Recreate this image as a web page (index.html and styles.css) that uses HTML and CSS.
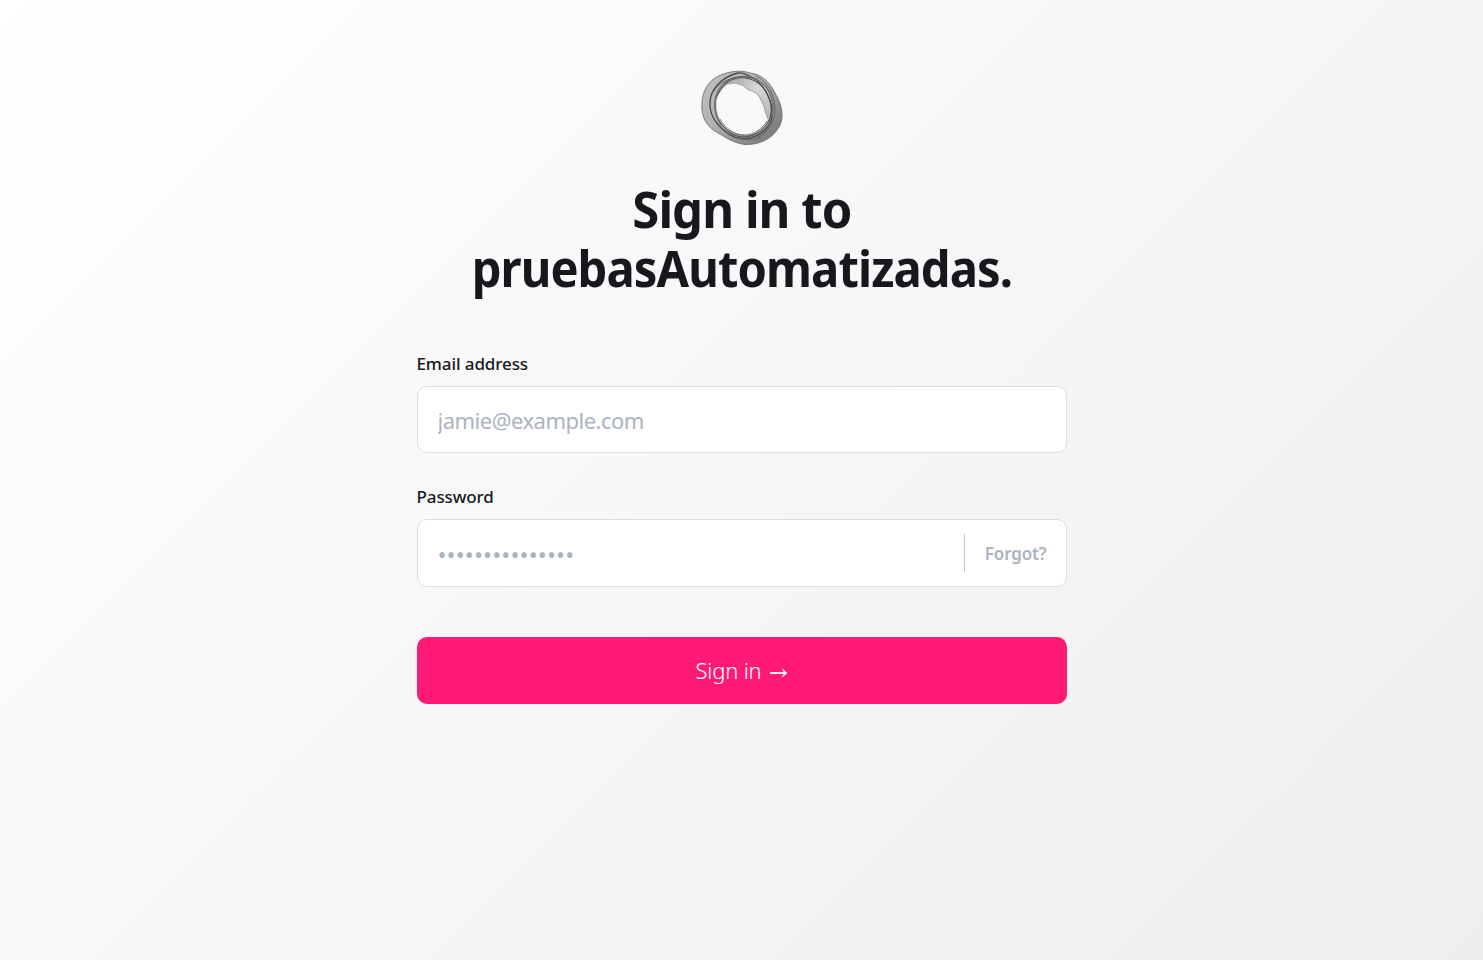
FILE: index.html
```html
<!DOCTYPE html>
<html lang="en">
<head>
<meta charset="utf-8">
<title>Sign in to pruebasAutomatizadas.</title>
<link rel="stylesheet" href="styles.css">
</head>
<body>
<main class="signin">
  <svg class="logo" viewBox="0 0 100 95" aria-hidden="true">
    <defs>
      <linearGradient id="smoke" x1="0" y1="0" x2="1" y2="1">
        <stop offset="0" stop-color="#c4c4c4"/>
        <stop offset=".45" stop-color="#b0b0b0"/>
        <stop offset="1" stop-color="#6d6d6d"/>
      </linearGradient>
      <linearGradient id="veil" x1="0" y1="0" x2="1" y2="1">
        <stop offset="0" stop-color="#9a9a9a"/>
        <stop offset=".5" stop-color="#d8d8d8"/>
        <stop offset="1" stop-color="#b4b4b4"/>
      </linearGradient>
    </defs>
    <path fill="url(#smoke)" fill-rule="evenodd" d="M10 48C9 35 14 24 23 18C33 12 47 9 58 13C69 14 78 22 83 33C91 46 93 60 85 70C78 80 66 85 53 84.500C41 83 33 77 26 73C15 67 10 58 10 48ZM25 38C23 49 26 58 31 65C39 73 50 77 61 74C70 71 76 65 78 55C79 39 73 26 61 20C50 16 32 21 25 38Z"/>
    <path fill="url(#veil)" d="M28 28C37 15 54 13 65 18C75 25 81 38 80 51L76 59C73 51 73 45 68 39C66 33 61 31 57 30C53 28 51 24 46 24C39 24 34 24 28 28Z"/>
    <g fill="none" stroke-linecap="round">
      <path stroke="#666" stroke-width=".8" d="M10 48C9 35 14 24 23 18C33 12 47 9 58 13C69 14 78 22 83 33C91 46 93 60 85 70C78 80 66 85 53 84.500C41 83 33 77 26 73C15 67 10 58 10 48Z"/>
      <path stroke="#4a4a4a" stroke-width="1.300" d="M46 13C30 17 18 29 18 43C17 57 28 70 42 77C56 82 70 76 78 64C84 49 76 27 61 18C56 15 51 12 46 13Z"/>
      <path stroke="#444" stroke-width="1" d="M23 42C22 55 28 66 40 74C53 81 67 75 76 62C84 47 76 31 66 23C52 13 30 16 23 42Z"/>
      <path stroke="#747474" stroke-width="1.600" d="M29 65C21 52 21 38 28 28C37 15 58 13 70 23C79 31 83 43 80 56"/>
      <path stroke="#606060" stroke-width=".8" d="M28 59C32 67 42 75 52 75C62 75 71 68 75 61M22 31C31 17 50 14 65 19M64 16C76 22 83 35 83 49C83 64 75 73 65 78M38 74C47 80 59 82 69 77"/>
      <path stroke="#888" stroke-width=".8" d="M46 24C51 24 53 28 57 30C63 31 67 35 69 40C73 46 73 54 76 59"/>
    </g>
  </svg>
  <h1 class="title"><span class="line line-a">Sign in to</span><span class="line line-b">pruebasAutomatizadas.</span></h1>
  <form class="form">
    <label class="label" for="email">Email address</label>
    <div class="field"><input class="input" id="email" type="email" placeholder="jamie@example.com"></div>
    <label class="label label-password" for="password">Password</label>
    <div class="field field-password">
      <input class="input dots" id="password" type="password" placeholder="•••••••••••••••">
      <a class="forgot">Forgot?</a>
    </div>
    <button class="submit" type="button"><span class="submit-text">Sign in</span><svg class="arrow" viewBox="0 0 18 12" aria-hidden="true"><path d="M0 6H15" fill="none" stroke="#fff" stroke-width="1.8"/><path d="M12.500 2L17 6L12.500 10L14.300 6Z" fill="#fff" stroke="#fff" stroke-width=".6"/></svg></button>
  </form>
</main>
</body>
</html>
```
FILE: styles.css
```css
* { box-sizing: border-box; }
body {
  margin: 0;
  min-height: 960px;
  background: linear-gradient(135deg, #fff 0%, #eee 100%);
  font-family: "Noto Sans", "Open Sans", sans-serif;
  color: #16181d;
}
.signin {
  width: 650px;
  margin: 0 auto;
  padding-top: 60px;
  display: flex;
  flex-direction: column;
  align-items: center;
}
.logo { width: 100px; height: 95px; display: block; }
.title {
  margin: 25px 0 0;
  font-size: 50px;
  line-height: 59px;
  font-weight: 700;
  text-align: center;
  white-space: nowrap;
}
.line { display: block; letter-spacing: -.95px; transform: scaleX(.942); }
.line-a { transform: scaleX(.98); }
.form { width: 100%; display: flex; flex-direction: column; margin-top: 54px; }
.label { font-size: 17px; line-height: 24px; font-weight: 500; letter-spacing: -.1px; }
.label-password { margin-top: 32px; }
.field {
  height: 67px;
  margin-top: 10px;
  display: flex;
  align-items: center;
  background: #fff;
  border: 1px solid #dedede;
  border-radius: 10px;
}
.field-password { height: 68px; }
.input {
  flex: 1;
  min-width: 0;
  height: 100%;
  padding: 0 20px;
  border: 0;
  outline: 0;
  background: transparent;
  font: 400 22px "Noto Sans", sans-serif;
  letter-spacing: -.5px;
}
.dots { font-size: 24px; letter-spacing: .1px; padding: 2px 20px 0; }
.input::placeholder { color: #abb4c0; opacity: 1; }
.forgot {
  height: 38px;
  padding: 1px 19px 0 20px;
  border-left: 1px solid #c4c4c4;
  color: #abb4c0;
  font-size: 17px;
  line-height: 38px;
  font-weight: 600;
  letter-spacing: -.15px;
}
.submit {
  height: 67px;
  margin-top: 50px;
  display: flex;
  align-items: center;
  justify-content: center;
  gap: 8px;
  border: 0;
  border-radius: 10px;
  background: #ff1a75;
  color: #fff;
  font: 300 22px "Noto Sans", sans-serif;
}
.submit-text { letter-spacing: -.2px; margin-top: -2px; }
.arrow { width: 18px; height: 12px; margin-top: 5px; }
```
